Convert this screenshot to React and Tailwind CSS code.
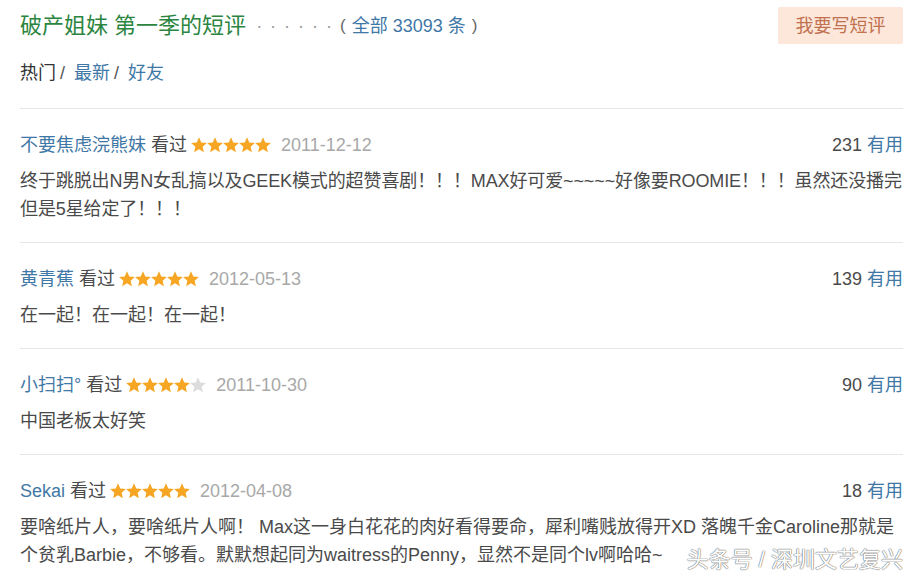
import React from "react"

const reviews = [
  {
    name: "不要焦虑浣熊妹",
    stars: 5,
    date: "2011-12-12",
    votes: 231,
    tight: true,
    text: "终于跳脱出N男N女乱搞以及GEEK模式的超赞喜剧！！！MAX好可爱~~~~~好像要ROOMIE！！！虽然还没播完但是5星给定了！！！",
  },
  { name: "黄青蕉", stars: 5, date: "2012-05-13", votes: 139, text: "在一起！在一起！在一起！" },
  { name: "小扫扫°", stars: 4, date: "2011-10-30", votes: 90, text: "中国老板太好笑" },
  {
    name: "Sekai",
    stars: 5,
    date: "2012-04-08",
    votes: 18,
    lines: [
      "要啥纸片人，要啥纸片人啊！ Max这一身白花花的肉好看得要命，犀利嘴贱放得开XD 落魄千金Caroline那就是",
      "个贫乳Barbie，不够看。默默想起同为waitress的Penny，显然不是同个lv啊哈哈~",
    ],
  },
]

function Star({ filled }) {
  return (
    <svg width="16" height="16" viewBox="1 1 22 22" className="shrink-0">
      <polygon
        points="12,1.5 15.1,8.6 22.8,9.3 17,14.4 18.7,22 12,18 5.3,22 7,14.4 1.2,9.3 8.9,8.6"
        fill={filled ? "#f6a623" : "#dcdcdc"}
      />
    </svg>
  )
}

function Review({ review, last }) {
  return (
    <div className="border-t border-[#e6e6e6] pt-[22px] pb-[19px]">
      <div className="flex h-7 items-center justify-between">
        <div className="flex items-center">
          <span className="text-[#3f78a6]">{review.name}</span>
          <span className="ml-[5px] text-[#4a4a4a]">看过</span>
          <span className="ml-[4px] flex">
            {[0, 1, 2, 3, 4].map((i) => (
              <Star key={i} filled={i < review.stars} />
            ))}
          </span>
          <span className="ml-[10px] text-[#a8a8a8]">{review.date}</span>
        </div>
        <div>
          <span className="text-[#4a4a4a]">{review.votes}</span>
          <span className="ml-[5px] text-[#3f78a6]">有用</span>
        </div>
      </div>
      {review.lines ? (
        <div className="mt-2 leading-7 text-[#4a4a4a]">
          <div className="whitespace-nowrap">{review.lines[0]}</div>
          <div className="flex items-start justify-between">
            <span className="whitespace-nowrap">{review.lines[1]}</span>
            {last && (
              <span
                className="mt-[5px] text-[22px] leading-7 whitespace-nowrap text-white"
                style={{ textShadow: "0 0 1px #777, 0 0 1px #777, 0 0 1px #777" }}
              >
                头条号 / 深圳文艺复兴
              </span>
            )}
          </div>
        </div>
      ) : (
        <p className={`mt-2 leading-7 text-[#4a4a4a] ${review.tight ? "tracking-[-0.12px]" : ""}`}>
          {review.text}
        </p>
      )}
    </div>
  )
}

export default function App() {
  return (
    <div
      className="h-[582px] overflow-hidden bg-white pr-[14px] pl-5 text-[18px] leading-7"
      style={{ fontFamily: '"Liberation Sans", "Noto Sans CJK SC", sans-serif' }}
    >
      <div className="flex h-[44px] items-end justify-between pt-[7px]">
        <div className="flex items-center self-center">
          <span className="text-[22px] text-[#2b8540]">破产姐妹 第一季的短评</span>
          <span className="ml-[10px] tracking-[8px] text-[#999]">······</span>
          <span className="text-[17px] text-[#666]">(</span>
          <span className="ml-[6px] text-[18px] text-[#3f78a6]">全部 33093 条</span>
          <span className="ml-[6px] text-[17px] text-[#666]">)</span>
        </div>
        <button className="h-[37px] w-[125px] rounded-[2px] bg-[#fde7da] text-[18px] text-[#c0714f]">
          我要写短评
        </button>
      </div>

      <div className="mt-[15px] mb-[21px] flex items-center text-[#333]">
        <span>热门</span>
        <span className="mr-[9px] ml-[4px] text-[#555]">/</span>
        <span className="text-[#3f78a6]">最新</span>
        <span className="mr-[9px] ml-[4px] text-[#555]">/</span>
        <span className="text-[#3f78a6]">好友</span>
      </div>

      {reviews.map((r, i) => (
        <Review key={r.name} review={r} last={i === reviews.length - 1} />
      ))}
    </div>
  )
}
